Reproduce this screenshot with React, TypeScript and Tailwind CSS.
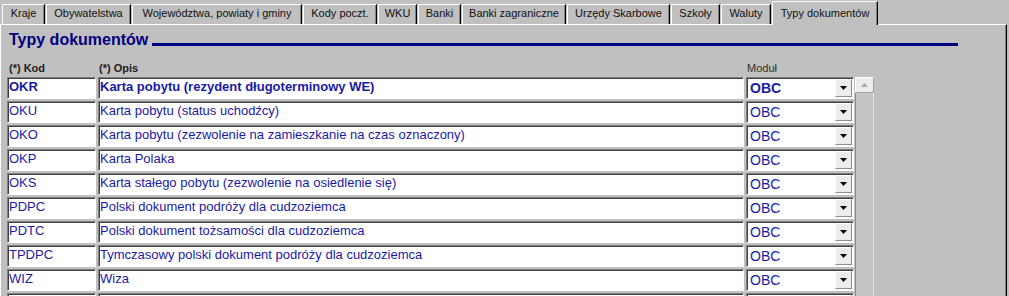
import React from "react"

const font = { fontFamily: '"Liberation Sans", Arial, sans-serif' }

const tabs = [
  { label: "Kraje", w: "w-[43px]" },
  { label: "Obywatelstwa", w: "w-[85px]" },
  { label: "Województwa, powiaty i gminy", w: "w-[170px]" },
  { label: "Kody poczt.", w: "w-[74px]" },
  { label: "WKU", w: "w-[39px]" },
  { label: "Banki", w: "w-[43px]" },
  { label: "Banki zagraniczne", w: "w-[104px]" },
  { label: "Urzędy Skarbowe", w: "w-[103px]" },
  { label: "Szkoły", w: "w-[49px]" },
  { label: "Waluty", w: "w-[50px]" },
]

const rows = [
  { kod: "OKR", opis: "Karta pobytu (rezydent długoterminowy WE)", modul: "OBC", bold: true },
  { kod: "OKU", opis: "Karta pobytu (status uchodźcy)", modul: "OBC" },
  { kod: "OKO", opis: "Karta pobytu (zezwolenie na zamieszkanie na czas oznaczony)", modul: "OBC" },
  { kod: "OKP", opis: "Karta Polaka", modul: "OBC" },
  { kod: "OKS", opis: "Karta stałego pobytu (zezwolenie na osiedlenie się)", modul: "OBC" },
  { kod: "PDPC", opis: "Polski dokument podróży dla cudzoziemca", modul: "OBC" },
  { kod: "PDTC", opis: "Polski dokument tożsamości dla cudzoziemca", modul: "OBC" },
  { kod: "TPDPC", opis: "Tymczasowy polski dokument podróży dla cudzoziemca", modul: "OBC" },
  { kod: "WIZ", opis: "Wiza", modul: "OBC" },
  { kod: "", opis: "", modul: "" },
]

const sunken =
  "h-[22px] bg-white border border-t-[#808080] border-l-[#808080] border-b-white border-r-white shadow-[inset_1px_1px_0_0_#404040] flex items-start pl-[1px] text-[#1a1aa6] whitespace-nowrap overflow-hidden"

function Field({ text, bold, className }: { text: string; bold?: boolean; className: string }) {
  return (
    <div className={`${sunken} pt-[1px] leading-[15px] text-[13px] ${className} ${bold ? "font-bold" : ""}`}>
      {text}
    </div>
  )
}

function ModuleSelect({ value, bold }: { value: string; bold?: boolean }) {
  return (
    <div className={`${sunken} w-[108px] relative pt-[2px] leading-[16px] text-[14px] ${bold ? "font-bold" : ""}`}>
      <span className="pl-[2px]">{value}</span>
      <div className="absolute right-[1px] top-[1px] w-[17px] h-[18px] bg-[#ececec] border border-t-white border-l-white border-b-[#8a8a8a] border-r-[#8a8a8a] flex items-center justify-center">
        <svg width="7" height="4" viewBox="0 0 7 4">
          <polygon points="0,0 7,0 3.5,4" fill="#000" />
        </svg>
      </div>
    </div>
  )
}

export default function App() {
  return (
    <div className="w-[1009px] h-[296px] overflow-hidden bg-[#c0c0c0] flex flex-col" style={font}>
      {/* tab strip */}
      <div className="h-[24px] flex items-end gap-[1px] pl-[2px] text-[11px] text-[#101010]">
        {tabs.map((t) => (
          <div
            key={t.label}
            className={`${t.w} h-[20px] rounded-tl-[2px] border-t border-l border-r border-t-white border-l-white border-r-black shadow-[inset_-1px_0_0_0_#808080] flex justify-center pt-[1px] leading-[14px] whitespace-nowrap`}
          >
            {t.label}
          </div>
        ))}
        <div className="w-[106px] h-[24px] relative top-[1px] z-10 bg-[#c0c0c0] rounded-tl-[2px] border-t border-l border-r border-t-white border-l-white border-r-black shadow-[inset_-1px_0_0_0_#808080] flex justify-center pt-[4px] leading-[14px] whitespace-nowrap">
          Typy dokumentów
        </div>
      </div>

      {/* panel */}
      <div className="flex-1 mr-[2px] border-t border-l border-r border-t-white border-l-white border-r-black shadow-[inset_-1px_0_0_0_#808080]">
        <div className="flex items-start pt-[5px] pl-[8px] h-[23px]">
          <span className="w-[143px] text-[16px] leading-[19px] font-bold text-[#000080] whitespace-nowrap">
            Typy dokumentów
          </span>
          <div className="mt-[13px] w-[806px] h-[3px] bg-[#000080]" />
        </div>

        <div className="mt-[12px] h-[17px] flex items-start pl-[6px] text-[11px] leading-[16px] text-[#1c1c1c]">
          <span className="w-[91px] pl-[2px] font-bold">(*) Kod</span>
          <span className="w-[648px] pl-[1px] font-bold">(*) Opis</span>
          <span className="pl-[1px] text-[#303030]">Moduł</span>
        </div>

        <div className="flex pl-[6px]">
          <div className="flex flex-col gap-[2px]">
            {rows.map((r, i) => (
              <div key={i} className="flex gap-[2px]">
                <Field text={r.kod} bold={r.bold} className="w-[89px]" />
                <Field text={r.opis} bold={r.bold} className="w-[646px]" />
                <ModuleSelect value={r.modul} bold={r.bold} />
              </div>
            ))}
          </div>
          <div className="ml-[1px] w-[19px] flex flex-col">
            <div className="h-[16px] bg-[#ececec] border border-t-white border-l-white border-b-[#a0a0a0] border-r-[#a0a0a0] flex items-center justify-center">
              <svg width="7" height="4" viewBox="0 0 7 4">
                <polygon points="3.5,0 7,4 0,4" fill="#a8a8a8" />
              </svg>
            </div>
            <div className="flex-1 border-l border-r border-l-[#8c8c8c] border-r-[#e6e6e6] bg-[#c4c4c4]" />
          </div>
        </div>
      </div>
    </div>
  )
}
